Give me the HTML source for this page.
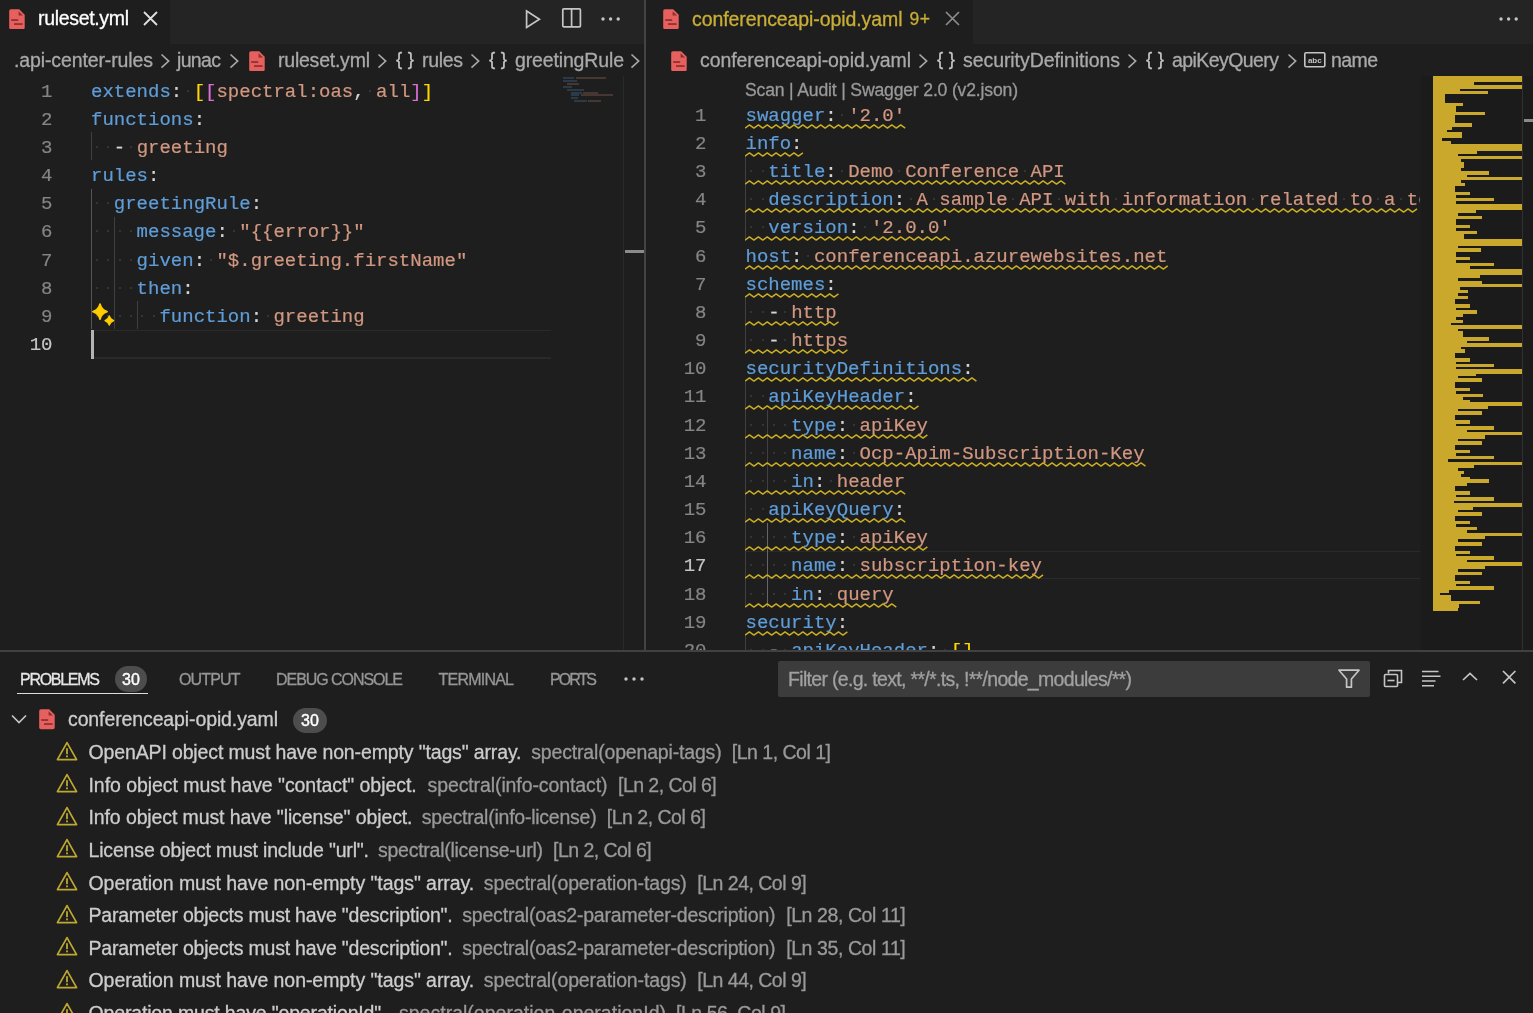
<!DOCTYPE html>
<html><head><meta charset="utf-8"><title>VS Code</title><style>
html,body{margin:0;padding:0;background:#1e1e1e;}
body{width:1533px;height:1013px;overflow:hidden;position:relative;font-family:"Liberation Sans", sans-serif;}
#r{position:absolute;left:0;top:0;width:1533px;height:1013px;overflow:hidden;background:#1e1e1e;filter:blur(0.55px);}
#r>div,#r>svg{position:absolute;}
.t{white-space:pre;-webkit-text-stroke:0.3px;}
.c{white-space:pre;font-family:"Liberation Mono", monospace;font-size:19px;-webkit-text-stroke:0.2px;}
.badge{-webkit-text-stroke:0.4px;background:#4d4d4d;color:#fff;border-radius:13px;text-align:center;font-family:"Liberation Sans", sans-serif;}
.m{font-family:"Liberation Mono", monospace;}
</style></head><body><div id="r">
<div style="left:0px;top:0px;width:1533px;height:44px;background:#242424;"></div>
<div style="left:0px;top:0px;width:169.8px;height:44px;background:#1e1e1e;"></div>
<div style="left:646px;top:0px;width:326.5px;height:44px;background:#1e1e1e;"></div>
<div style="left:644.2px;top:0px;width:1.4px;height:651px;background:#444444;"></div>
<svg style="left:9px;top:8.5px" width="16" height="20.5" viewBox="0 0 16 20.5"><path d="M2 0.3 H10.2 L15.7 5.8 V18.4 a1.8 1.8 0 0 1 -1.8 1.8 H2 a1.8 1.8 0 0 1 -1.8 -1.8 V2.1 A1.8 1.8 0 0 1 2 0.3 Z" fill="#e5605e"/><path d="M9.6 2.2 V6.6 H14 Z" fill="#8c2f2c"/><rect x="2.2" y="10.2" width="7" height="1.7" fill="#8c2f2c"/><rect x="5" y="14.2" width="8.6" height="1.7" fill="#8c2f2c"/></svg>
<div id="t1" class="t" style="left:38px;top:3.40px;height:30px;line-height:30px;font-size:19.5px;color:#ffffff;font-weight:400;letter-spacing:-0.328px;">ruleset.yml</div>
<svg style="left:142.9px;top:11.100000000000001px" width="15.0" height="15.0" viewBox="-7.5 -7.5 15.0 15.0"><path d="M-6.5 -6.5 L6.5 6.5 M6.5 -6.5 L-6.5 6.5" stroke="#e0e0e0" stroke-width="1.8" fill="none"/></svg>
<svg style="left:523px;top:8px" width="20" height="22" viewBox="0 0 20 22"><path d="M3.6 3 L16.4 11.2 L3.6 19.4 Z" fill="none" stroke="#c5c5c5" stroke-width="1.7" stroke-linejoin="miter"/></svg>
<svg style="left:561.4px;top:7.2px" width="22" height="22" viewBox="0 0 22 22"><rect x="1.8" y="1.8" width="17.6" height="18" rx="1" fill="none" stroke="#c5c5c5" stroke-width="1.7"/><path d="M10.6 2 V19.6" stroke="#c5c5c5" stroke-width="1.7"/></svg>
<svg style="left:599.9px;top:15.5px" width="21.2" height="6" viewBox="-10.6 -3 21.2 6"><circle cx="-7.6" cy="0" r="1.7" fill="#c5c5c5"/><circle cx="0" cy="0" r="1.7" fill="#c5c5c5"/><circle cx="7.6" cy="0" r="1.7" fill="#c5c5c5"/></svg>
<div id="t2" class="t" style="left:14px;top:45.40px;height:30px;line-height:30px;font-size:19.5px;color:#a9a9a9;font-weight:400;letter-spacing:-0.118px;">.api-center-rules</div>
<svg style="left:159.9px;top:52.8px" width="10.2" height="16.2" viewBox="-1 -1 10.2 16.2"><path d="M0.5 0.5 L7.7 7.1 L0.5 13.7" fill="none" stroke="#a9a9a9" stroke-width="1.6"/></svg>
<div id="t3" class="t" style="left:177px;top:45.40px;height:30px;line-height:30px;font-size:19.5px;color:#a9a9a9;font-weight:400;letter-spacing:-0.656px;">junac</div>
<svg style="left:229.4px;top:52.8px" width="10.2" height="16.2" viewBox="-1 -1 10.2 16.2"><path d="M0.5 0.5 L7.7 7.1 L0.5 13.7" fill="none" stroke="#a9a9a9" stroke-width="1.6"/></svg>
<svg style="left:249px;top:50.5px" width="16" height="20.5" viewBox="0 0 16 20.5"><path d="M2 0.3 H10.2 L15.7 5.8 V18.4 a1.8 1.8 0 0 1 -1.8 1.8 H2 a1.8 1.8 0 0 1 -1.8 -1.8 V2.1 A1.8 1.8 0 0 1 2 0.3 Z" fill="#e5605e"/><path d="M9.6 2.2 V6.6 H14 Z" fill="#8c2f2c"/><rect x="2.2" y="10.2" width="7" height="1.7" fill="#8c2f2c"/><rect x="5" y="14.2" width="8.6" height="1.7" fill="#8c2f2c"/></svg>
<div id="t4" class="t" style="left:278px;top:45.40px;height:30px;line-height:30px;font-size:19.5px;color:#a9a9a9;font-weight:400;letter-spacing:-0.228px;">ruleset.yml</div>
<svg style="left:376.9px;top:52.8px" width="10.2" height="16.2" viewBox="-1 -1 10.2 16.2"><path d="M0.5 0.5 L7.7 7.1 L0.5 13.7" fill="none" stroke="#a9a9a9" stroke-width="1.6"/></svg>
<div id="t5" class="t" style="left:396px;top:43.80px;height:30px;line-height:30px;font-size:18.6px;color:#c5c5c5;font-weight:400;letter-spacing:5.578px;letter-spacing:5.6px;">{}</div>
<div id="t6" class="t" style="left:422px;top:45.40px;height:30px;line-height:30px;font-size:19.5px;color:#a9a9a9;font-weight:400;letter-spacing:-0.320px;">rules</div>
<svg style="left:470.4px;top:52.8px" width="10.2" height="16.2" viewBox="-1 -1 10.2 16.2"><path d="M0.5 0.5 L7.7 7.1 L0.5 13.7" fill="none" stroke="#a9a9a9" stroke-width="1.6"/></svg>
<div id="t7" class="t" style="left:489px;top:43.80px;height:30px;line-height:30px;font-size:18.6px;color:#c5c5c5;font-weight:400;letter-spacing:5.578px;letter-spacing:5.6px;">{}</div>
<div id="t8" class="t" style="left:515px;top:45.40px;height:30px;line-height:30px;font-size:19.5px;color:#a9a9a9;font-weight:400;letter-spacing:-0.143px;">greetingRule</div>
<svg style="left:629.9px;top:52.8px" width="10.2" height="16.2" viewBox="-1 -1 10.2 16.2"><path d="M0.5 0.5 L7.7 7.1 L0.5 13.7" fill="none" stroke="#a9a9a9" stroke-width="1.6"/></svg>
<div style="left:91px;top:329.94500000000005px;width:460px;height:1.3px;background:#2a2a2a;"></div>
<div style="left:91px;top:357.21500000000003px;width:460px;height:1.3px;background:#2a2a2a;"></div>
<div style="left:90.8px;top:132.25px;width:1.2px;height:28.17px;background:#404040"></div>
<div style="left:90.8px;top:188.59px;width:1.2px;height:140.85px;background:#555555"></div>
<div style="left:113.5px;top:216.77px;width:1.2px;height:112.68px;background:#404040"></div>
<div style="left:137px;top:301.28px;width:1.2px;height:28.17px;background:#404040"></div>
<div class="c" style="left:-7.5px;width:60px;text-align:right;top:77.51px;height:28.17px;line-height:28.17px;color:#858585">1</div>
<div class="c" style="left:91px;top:77.51px;height:28.17px;line-height:28.17px;"><span style="color:#5f9dd8">extends</span><span style="color:#d4d4d4">:</span><span style="color:#d4d4d4"> </span><span style="color:#ffd700">[</span><span style="color:#da70d6">[</span><span style="color:#d19780">spectral:oas</span><span style="color:#d4d4d4">,</span><span style="color:#d4d4d4"> </span><span style="color:#d19780">all</span><span style="color:#da70d6">]</span><span style="color:#ffd700">]</span></div>
<div style="left:186.9px;top:89.5px;width:2px;height:2px;background:#3d3d3d;border-radius:1px"></div>
<div style="left:369.3px;top:89.5px;width:2px;height:2px;background:#3d3d3d;border-radius:1px"></div>
<div class="c" style="left:-7.5px;width:60px;text-align:right;top:105.69px;height:28.17px;line-height:28.17px;color:#858585">2</div>
<div class="c" style="left:91px;top:105.69px;height:28.17px;line-height:28.17px;"><span style="color:#5f9dd8">functions</span><span style="color:#d4d4d4">:</span></div>
<div class="c" style="left:-7.5px;width:60px;text-align:right;top:133.85px;height:28.17px;line-height:28.17px;color:#858585">3</div>
<div class="c" style="left:91px;top:133.85px;height:28.17px;line-height:28.17px;"><span style="color:#d4d4d4">  </span><span style="color:#d4d4d4">-</span><span style="color:#d4d4d4"> </span><span style="color:#d19780">greeting</span></div>
<div style="left:95.7px;top:145.8px;width:2px;height:2px;background:#3d3d3d;border-radius:1px"></div>
<div style="left:107.1px;top:145.8px;width:2px;height:2px;background:#3d3d3d;border-radius:1px"></div>
<div style="left:129.9px;top:145.8px;width:2px;height:2px;background:#3d3d3d;border-radius:1px"></div>
<div class="c" style="left:-7.5px;width:60px;text-align:right;top:162.02px;height:28.17px;line-height:28.17px;color:#858585">4</div>
<div class="c" style="left:91px;top:162.02px;height:28.17px;line-height:28.17px;"><span style="color:#5f9dd8">rules</span><span style="color:#d4d4d4">:</span></div>
<div class="c" style="left:-7.5px;width:60px;text-align:right;top:190.19px;height:28.17px;line-height:28.17px;color:#858585">5</div>
<div class="c" style="left:91px;top:190.19px;height:28.17px;line-height:28.17px;"><span style="color:#d4d4d4">  </span><span style="color:#5f9dd8">greetingRule</span><span style="color:#d4d4d4">:</span></div>
<div style="left:95.7px;top:202.2px;width:2px;height:2px;background:#3d3d3d;border-radius:1px"></div>
<div style="left:107.1px;top:202.2px;width:2px;height:2px;background:#3d3d3d;border-radius:1px"></div>
<div class="c" style="left:-7.5px;width:60px;text-align:right;top:218.37px;height:28.17px;line-height:28.17px;color:#858585">6</div>
<div class="c" style="left:91px;top:218.37px;height:28.17px;line-height:28.17px;"><span style="color:#d4d4d4">    </span><span style="color:#5f9dd8">message</span><span style="color:#d4d4d4">:</span><span style="color:#d4d4d4"> </span><span style="color:#d19780">&quot;{{error}}&quot;</span></div>
<div style="left:95.7px;top:230.4px;width:2px;height:2px;background:#3d3d3d;border-radius:1px"></div>
<div style="left:107.1px;top:230.4px;width:2px;height:2px;background:#3d3d3d;border-radius:1px"></div>
<div style="left:118.5px;top:230.4px;width:2px;height:2px;background:#3d3d3d;border-radius:1px"></div>
<div style="left:129.9px;top:230.4px;width:2px;height:2px;background:#3d3d3d;border-radius:1px"></div>
<div style="left:232.5px;top:230.4px;width:2px;height:2px;background:#3d3d3d;border-radius:1px"></div>
<div class="c" style="left:-7.5px;width:60px;text-align:right;top:246.53px;height:28.17px;line-height:28.17px;color:#858585">7</div>
<div class="c" style="left:91px;top:246.53px;height:28.17px;line-height:28.17px;"><span style="color:#d4d4d4">    </span><span style="color:#5f9dd8">given</span><span style="color:#d4d4d4">:</span><span style="color:#d4d4d4"> </span><span style="color:#d19780">&quot;$.greeting.firstName&quot;</span></div>
<div style="left:95.7px;top:258.5px;width:2px;height:2px;background:#3d3d3d;border-radius:1px"></div>
<div style="left:107.1px;top:258.5px;width:2px;height:2px;background:#3d3d3d;border-radius:1px"></div>
<div style="left:118.5px;top:258.5px;width:2px;height:2px;background:#3d3d3d;border-radius:1px"></div>
<div style="left:129.9px;top:258.5px;width:2px;height:2px;background:#3d3d3d;border-radius:1px"></div>
<div style="left:209.7px;top:258.5px;width:2px;height:2px;background:#3d3d3d;border-radius:1px"></div>
<div class="c" style="left:-7.5px;width:60px;text-align:right;top:274.71px;height:28.17px;line-height:28.17px;color:#858585">8</div>
<div class="c" style="left:91px;top:274.71px;height:28.17px;line-height:28.17px;"><span style="color:#d4d4d4">    </span><span style="color:#5f9dd8">then</span><span style="color:#d4d4d4">:</span></div>
<div style="left:95.7px;top:286.7px;width:2px;height:2px;background:#3d3d3d;border-radius:1px"></div>
<div style="left:107.1px;top:286.7px;width:2px;height:2px;background:#3d3d3d;border-radius:1px"></div>
<div style="left:118.5px;top:286.7px;width:2px;height:2px;background:#3d3d3d;border-radius:1px"></div>
<div style="left:129.9px;top:286.7px;width:2px;height:2px;background:#3d3d3d;border-radius:1px"></div>
<div class="c" style="left:-7.5px;width:60px;text-align:right;top:302.88px;height:28.17px;line-height:28.17px;color:#858585">9</div>
<div class="c" style="left:91px;top:302.88px;height:28.17px;line-height:28.17px;"><span style="color:#d4d4d4">      </span><span style="color:#5f9dd8">function</span><span style="color:#d4d4d4">:</span><span style="color:#d4d4d4"> </span><span style="color:#d19780">greeting</span></div>
<div style="left:95.7px;top:314.9px;width:2px;height:2px;background:#3d3d3d;border-radius:1px"></div>
<div style="left:107.1px;top:314.9px;width:2px;height:2px;background:#3d3d3d;border-radius:1px"></div>
<div style="left:118.5px;top:314.9px;width:2px;height:2px;background:#3d3d3d;border-radius:1px"></div>
<div style="left:129.9px;top:314.9px;width:2px;height:2px;background:#3d3d3d;border-radius:1px"></div>
<div style="left:141.3px;top:314.9px;width:2px;height:2px;background:#3d3d3d;border-radius:1px"></div>
<div style="left:152.7px;top:314.9px;width:2px;height:2px;background:#3d3d3d;border-radius:1px"></div>
<div style="left:266.7px;top:314.9px;width:2px;height:2px;background:#3d3d3d;border-radius:1px"></div>
<div class="c" style="left:-7.5px;width:60px;text-align:right;top:331.05px;height:28.17px;line-height:28.17px;color:#c6c6c6">10</div>
<div style="left:90.6px;top:330.0450000000001px;width:3.6px;height:28.470000000000002px;background:#b4b4b4;"></div>
<svg style="left:91px;top:301.8px" width="26" height="28" viewBox="0 0 26 28"><path d="M9 2.2 C9.9 6 12 8.4 16 9.6 C12 10.8 9.9 13.2 9 17 C8.1 13.2 6 10.8 2 9.6 C6 8.4 8.1 6 9 2.2 Z" fill="#ffcc00" stroke="#ffcc00" stroke-width="1.8" stroke-linejoin="round"/><path d="M18.3 14 C18.8 16.3 20 17.6 22.6 18.6 C20 19.6 18.8 20.9 18.3 23.2 C17.8 20.9 16.6 19.6 14 18.6 C16.6 17.6 17.8 16.3 18.3 14 Z" fill="#ffcc00" stroke="#ffcc00" stroke-width="1.3" stroke-linejoin="round"/></svg>
<div style="left:563.0px;top:77.0px;width:11.2px;height:2px;background:#5f9dd8;opacity:.22"></div>
<div style="left:575.5px;top:77.0px;width:30.0px;height:2px;background:#d19780;opacity:.22"></div>
<div style="left:563.0px;top:79.9px;width:13.8px;height:2px;background:#5f9dd8;opacity:.22"></div>
<div style="left:566.8px;top:82.8px;width:12.5px;height:2px;background:#d19780;opacity:.22"></div>
<div style="left:563.0px;top:85.7px;width:8.8px;height:2px;background:#5f9dd8;opacity:.22"></div>
<div style="left:566.8px;top:88.6px;width:17.5px;height:2px;background:#5f9dd8;opacity:.22"></div>
<div style="left:570.5px;top:91.5px;width:11.2px;height:2px;background:#5f9dd8;opacity:.22"></div>
<div style="left:583.0px;top:91.5px;width:15.0px;height:2px;background:#d19780;opacity:.22"></div>
<div style="left:570.5px;top:94.4px;width:8.8px;height:2px;background:#5f9dd8;opacity:.22"></div>
<div style="left:580.5px;top:94.4px;width:32.5px;height:2px;background:#d19780;opacity:.22"></div>
<div style="left:570.5px;top:97.3px;width:7.5px;height:2px;background:#5f9dd8;opacity:.22"></div>
<div style="left:574.2px;top:100.2px;width:12.5px;height:2px;background:#5f9dd8;opacity:.22"></div>
<div style="left:588.0px;top:100.2px;width:12.5px;height:2px;background:#d19780;opacity:.22"></div>
<div style="left:624.6px;top:250px;width:19.6px;height:3px;background:#8a8a8a;"></div>
<div style="left:623px;top:76px;width:1px;height:575px;background:#2a2a2a;"></div>
<svg style="left:663px;top:8.5px" width="16" height="20.5" viewBox="0 0 16 20.5"><path d="M2 0.3 H10.2 L15.7 5.8 V18.4 a1.8 1.8 0 0 1 -1.8 1.8 H2 a1.8 1.8 0 0 1 -1.8 -1.8 V2.1 A1.8 1.8 0 0 1 2 0.3 Z" fill="#e5605e"/><path d="M9.6 2.2 V6.6 H14 Z" fill="#8c2f2c"/><rect x="2.2" y="10.2" width="7" height="1.7" fill="#8c2f2c"/><rect x="5" y="14.2" width="8.6" height="1.7" fill="#8c2f2c"/></svg>
<div id="t9" class="t" style="left:692px;top:4.20px;height:30px;line-height:30px;font-size:19.5px;color:#c9ae36;font-weight:400;letter-spacing:-0.089px;">conferenceapi-opid.yaml</div>
<div id="t10" class="t" style="left:909.4px;top:4.20px;height:30px;line-height:30px;font-size:17.5px;color:#c9ae36;font-weight:400;letter-spacing:0.647px;">9+</div>
<svg style="left:944.5px;top:10.899999999999999px" width="15.0" height="15.0" viewBox="-7.5 -7.5 15.0 15.0"><path d="M-6.5 -6.5 L6.5 6.5 M6.5 -6.5 L-6.5 6.5" stroke="#8c8c8c" stroke-width="1.7" fill="none"/></svg>
<svg style="left:1497.9px;top:15.5px" width="21.2" height="6" viewBox="-10.6 -3 21.2 6"><circle cx="-7.6" cy="0" r="1.7" fill="#c5c5c5"/><circle cx="0" cy="0" r="1.7" fill="#c5c5c5"/><circle cx="7.6" cy="0" r="1.7" fill="#c5c5c5"/></svg>
<svg style="left:671px;top:50.5px" width="16" height="20.5" viewBox="0 0 16 20.5"><path d="M2 0.3 H10.2 L15.7 5.8 V18.4 a1.8 1.8 0 0 1 -1.8 1.8 H2 a1.8 1.8 0 0 1 -1.8 -1.8 V2.1 A1.8 1.8 0 0 1 2 0.3 Z" fill="#e5605e"/><path d="M9.6 2.2 V6.6 H14 Z" fill="#8c2f2c"/><rect x="2.2" y="10.2" width="7" height="1.7" fill="#8c2f2c"/><rect x="5" y="14.2" width="8.6" height="1.7" fill="#8c2f2c"/></svg>
<div id="t11" class="t" style="left:700px;top:45.40px;height:30px;line-height:30px;font-size:19.5px;color:#a9a9a9;font-weight:400;letter-spacing:-0.066px;">conferenceapi-opid.yaml</div>
<svg style="left:917.9px;top:52.8px" width="10.2" height="16.2" viewBox="-1 -1 10.2 16.2"><path d="M0.5 0.5 L7.7 7.1 L0.5 13.7" fill="none" stroke="#a9a9a9" stroke-width="1.6"/></svg>
<div id="t12" class="t" style="left:937px;top:43.80px;height:30px;line-height:30px;font-size:18.6px;color:#c5c5c5;font-weight:400;letter-spacing:5.578px;letter-spacing:5.6px;">{}</div>
<div id="t13" class="t" style="left:963px;top:45.40px;height:30px;line-height:30px;font-size:19.5px;color:#a9a9a9;font-weight:400;letter-spacing:-0.069px;">securityDefinitions</div>
<svg style="left:1126.9px;top:52.8px" width="10.2" height="16.2" viewBox="-1 -1 10.2 16.2"><path d="M0.5 0.5 L7.7 7.1 L0.5 13.7" fill="none" stroke="#a9a9a9" stroke-width="1.6"/></svg>
<div id="t14" class="t" style="left:1146px;top:43.80px;height:30px;line-height:30px;font-size:18.6px;color:#c5c5c5;font-weight:400;letter-spacing:5.578px;letter-spacing:5.6px;">{}</div>
<div id="t15" class="t" style="left:1172px;top:45.40px;height:30px;line-height:30px;font-size:19.5px;color:#a9a9a9;font-weight:400;letter-spacing:-0.573px;">apiKeyQuery</div>
<svg style="left:1286.9px;top:52.8px" width="10.2" height="16.2" viewBox="-1 -1 10.2 16.2"><path d="M0.5 0.5 L7.7 7.1 L0.5 13.7" fill="none" stroke="#a9a9a9" stroke-width="1.6"/></svg>
<svg style="left:1303px;top:50.5px" width="24" height="18" viewBox="0 0 24 18"><rect x="1.8" y="1.8" width="20" height="14" rx="1.2" fill="none" stroke="#c5c5c5" stroke-width="1.6"/><text x="11.8" y="11.8" font-family="Liberation Sans, sans-serif" font-size="8" font-weight="700" fill="#c5c5c5" text-anchor="middle">abc</text></svg>
<div id="t16" class="t" style="left:1331px;top:45.40px;height:30px;line-height:30px;font-size:19.5px;color:#a9a9a9;font-weight:400;letter-spacing:-0.594px;">name</div>
<div id="t17" class="t" style="left:745px;top:75.00px;height:30px;line-height:30px;font-size:17.6px;color:#999999;font-weight:400;letter-spacing:-0.173px;">Scan | Audit | Swagger 2.0 (v2.json)</div>
<div style="left:745px;top:550.835px;width:675px;height:1.3px;background:#2a2a2a;"></div>
<div style="left:745px;top:577.7050000000002px;width:675px;height:1.3px;background:#2a2a2a;"></div>
<div style="left:745.1px;top:156.46px;width:1.2px;height:84.51px;background:#404040"></div>
<div style="left:745.1px;top:297.31px;width:1.2px;height:56.34px;background:#404040"></div>
<div style="left:745.1px;top:381.82px;width:1.2px;height:225.36px;background:#404040"></div>
<div style="left:745.1px;top:635.35px;width:1.2px;height:28.17px;background:#404040"></div>
<div style="left:767.3px;top:409.99px;width:1.2px;height:84.51px;background:#404040"></div>
<div style="left:767.3px;top:522.66px;width:1.2px;height:84.51px;background:#666666"></div>
<div class="c" style="left:646.5px;width:60px;text-align:right;top:101.72px;height:28.17px;line-height:28.17px;color:#858585">1</div>
<div class="c" style="left:745.5px;top:101.72px;height:28.17px;line-height:28.17px;width:674.5px;overflow:hidden;"><span style="color:#5f9dd8">swagger</span><span style="color:#d4d4d4">:</span><span style="color:#d4d4d4"> </span><span style="color:#d19780">&#x27;2.0&#x27;</span></div>
<div style="left:841.4px;top:113.7px;width:2px;height:2px;background:#3d3d3d;border-radius:1px"></div>
<svg style="left:745px;top:123.69px" width="163.1" height="5" viewBox="0 0 163.1 5"><path d="M0.0 4.1 L4.5 0.9 L8.9 4.1 L13.4 0.9 L17.8 4.1 L22.2 0.9 L26.7 4.1 L31.1 0.9 L35.6 4.1 L40.1 0.9 L44.5 4.1 L49.0 0.9 L53.4 4.1 L57.9 0.9 L62.3 4.1 L66.8 0.9 L71.2 4.1 L75.7 0.9 L80.1 4.1 L84.6 0.9 L89.0 4.1 L93.5 0.9 L97.9 4.1 L102.4 0.9 L106.8 4.1 L111.3 0.9 L115.7 4.1 L120.2 0.9 L124.6 4.1 L129.1 0.9 L133.5 4.1 L138.0 0.9 L142.4 4.1 L146.8 0.9 L151.3 4.1 L155.7 0.9 L160.2 4.1" fill="none" stroke="#c9ad22" stroke-width="1.5" stroke-linejoin="round"/></svg>
<div class="c" style="left:646.5px;width:60px;text-align:right;top:129.88px;height:28.17px;line-height:28.17px;color:#858585">2</div>
<div class="c" style="left:745.5px;top:129.88px;height:28.17px;line-height:28.17px;width:674.5px;overflow:hidden;"><span style="color:#5f9dd8">info</span><span style="color:#d4d4d4">:</span></div>
<svg style="left:745px;top:151.86px" width="60.5" height="5" viewBox="0 0 60.5 5"><path d="M0.0 4.1 L4.5 0.9 L8.9 4.1 L13.4 0.9 L17.8 4.1 L22.2 0.9 L26.7 4.1 L31.1 0.9 L35.6 4.1 L40.1 0.9 L44.5 4.1 L49.0 0.9 L53.4 4.1 L57.9 0.9" fill="none" stroke="#c9ad22" stroke-width="1.5" stroke-linejoin="round"/></svg>
<div class="c" style="left:646.5px;width:60px;text-align:right;top:158.06px;height:28.17px;line-height:28.17px;color:#858585">3</div>
<div class="c" style="left:745.5px;top:158.06px;height:28.17px;line-height:28.17px;width:674.5px;overflow:hidden;"><span style="color:#d4d4d4">  </span><span style="color:#5f9dd8">title</span><span style="color:#d4d4d4">:</span><span style="color:#d4d4d4"> </span><span style="color:#d19780">Demo Conference API</span></div>
<div style="left:750.2px;top:170.0px;width:2px;height:2px;background:#3d3d3d;border-radius:1px"></div>
<div style="left:761.6px;top:170.0px;width:2px;height:2px;background:#3d3d3d;border-radius:1px"></div>
<div style="left:841.4px;top:170.0px;width:2px;height:2px;background:#3d3d3d;border-radius:1px"></div>
<div style="left:898.4px;top:170.0px;width:2px;height:2px;background:#3d3d3d;border-radius:1px"></div>
<div style="left:1023.8px;top:170.0px;width:2px;height:2px;background:#3d3d3d;border-radius:1px"></div>
<svg style="left:745px;top:180.03px" width="322.8" height="5" viewBox="0 0 322.8 5"><path d="M0.0 4.1 L4.5 0.9 L8.9 4.1 L13.4 0.9 L17.8 4.1 L22.2 0.9 L26.7 4.1 L31.1 0.9 L35.6 4.1 L40.1 0.9 L44.5 4.1 L49.0 0.9 L53.4 4.1 L57.9 0.9 L62.3 4.1 L66.8 0.9 L71.2 4.1 L75.7 0.9 L80.1 4.1 L84.6 0.9 L89.0 4.1 L93.5 0.9 L97.9 4.1 L102.4 0.9 L106.8 4.1 L111.3 0.9 L115.7 4.1 L120.2 0.9 L124.6 4.1 L129.1 0.9 L133.5 4.1 L138.0 0.9 L142.4 4.1 L146.8 0.9 L151.3 4.1 L155.7 0.9 L160.2 4.1 L164.6 0.9 L169.1 4.1 L173.5 0.9 L178.0 4.1 L182.4 0.9 L186.9 4.1 L191.3 0.9 L195.8 4.1 L200.2 0.9 L204.7 4.1 L209.1 0.9 L213.6 4.1 L218.0 0.9 L222.5 4.1 L226.9 0.9 L231.4 4.1 L235.8 0.9 L240.3 4.1 L244.7 0.9 L249.2 4.1 L253.6 0.9 L258.1 4.1 L262.5 0.9 L267.0 4.1 L271.4 0.9 L275.9 4.1 L280.3 0.9 L284.8 4.1 L289.2 0.9 L293.7 4.1 L298.1 0.9 L302.6 4.1 L307.0 0.9 L311.5 4.1 L315.9 0.9 L320.4 4.1" fill="none" stroke="#c9ad22" stroke-width="1.5" stroke-linejoin="round"/></svg>
<div class="c" style="left:646.5px;width:60px;text-align:right;top:186.22px;height:28.17px;line-height:28.17px;color:#858585">4</div>
<div class="c" style="left:745.5px;top:186.22px;height:28.17px;line-height:28.17px;width:674.5px;overflow:hidden;"><span style="color:#d4d4d4">  </span><span style="color:#5f9dd8">description</span><span style="color:#d4d4d4">:</span><span style="color:#d4d4d4"> </span><span style="color:#d19780">A sample API with information related to a technical conference.</span></div>
<div style="left:750.2px;top:198.2px;width:2px;height:2px;background:#3d3d3d;border-radius:1px"></div>
<div style="left:761.6px;top:198.2px;width:2px;height:2px;background:#3d3d3d;border-radius:1px"></div>
<div style="left:909.8px;top:198.2px;width:2px;height:2px;background:#3d3d3d;border-radius:1px"></div>
<div style="left:932.6px;top:198.2px;width:2px;height:2px;background:#3d3d3d;border-radius:1px"></div>
<div style="left:1012.4px;top:198.2px;width:2px;height:2px;background:#3d3d3d;border-radius:1px"></div>
<div style="left:1058.1px;top:198.2px;width:2px;height:2px;background:#3d3d3d;border-radius:1px"></div>
<div style="left:1115.1px;top:198.2px;width:2px;height:2px;background:#3d3d3d;border-radius:1px"></div>
<div style="left:1251.9px;top:198.2px;width:2px;height:2px;background:#3d3d3d;border-radius:1px"></div>
<div style="left:1343.1px;top:198.2px;width:2px;height:2px;background:#3d3d3d;border-radius:1px"></div>
<div style="left:1377.3px;top:198.2px;width:2px;height:2px;background:#3d3d3d;border-radius:1px"></div>
<div style="left:1400.1px;top:198.2px;width:2px;height:2px;background:#3d3d3d;border-radius:1px"></div>
<svg style="left:745px;top:208.20px" width="675.0" height="5" viewBox="0 0 675.0 5"><path d="M0.0 4.1 L4.5 0.9 L8.9 4.1 L13.4 0.9 L17.8 4.1 L22.2 0.9 L26.7 4.1 L31.1 0.9 L35.6 4.1 L40.1 0.9 L44.5 4.1 L49.0 0.9 L53.4 4.1 L57.9 0.9 L62.3 4.1 L66.8 0.9 L71.2 4.1 L75.7 0.9 L80.1 4.1 L84.6 0.9 L89.0 4.1 L93.5 0.9 L97.9 4.1 L102.4 0.9 L106.8 4.1 L111.3 0.9 L115.7 4.1 L120.2 0.9 L124.6 4.1 L129.1 0.9 L133.5 4.1 L138.0 0.9 L142.4 4.1 L146.8 0.9 L151.3 4.1 L155.7 0.9 L160.2 4.1 L164.6 0.9 L169.1 4.1 L173.5 0.9 L178.0 4.1 L182.4 0.9 L186.9 4.1 L191.3 0.9 L195.8 4.1 L200.2 0.9 L204.7 4.1 L209.1 0.9 L213.6 4.1 L218.0 0.9 L222.5 4.1 L226.9 0.9 L231.4 4.1 L235.8 0.9 L240.3 4.1 L244.7 0.9 L249.2 4.1 L253.6 0.9 L258.1 4.1 L262.5 0.9 L267.0 4.1 L271.4 0.9 L275.9 4.1 L280.3 0.9 L284.8 4.1 L289.2 0.9 L293.7 4.1 L298.1 0.9 L302.6 4.1 L307.0 0.9 L311.5 4.1 L315.9 0.9 L320.4 4.1 L324.8 0.9 L329.3 4.1 L333.7 0.9 L338.2 4.1 L342.6 0.9 L347.1 4.1 L351.5 0.9 L356.0 4.1 L360.4 0.9 L364.9 4.1 L369.3 0.9 L373.8 4.1 L378.2 0.9 L382.7 4.1 L387.1 0.9 L391.6 4.1 L396.0 0.9 L400.5 4.1 L404.9 0.9 L409.4 4.1 L413.8 0.9 L418.3 4.1 L422.7 0.9 L427.2 4.1 L431.6 0.9 L436.1 4.1 L440.5 0.9 L445.0 4.1 L449.4 0.9 L453.9 4.1 L458.3 0.9 L462.8 4.1 L467.2 0.9 L471.7 4.1 L476.1 0.9 L480.6 4.1 L485.0 0.9 L489.5 4.1 L493.9 0.9 L498.4 4.1 L502.8 0.9 L507.3 4.1 L511.7 0.9 L516.2 4.1 L520.6 0.9 L525.1 4.1 L529.5 0.9 L534.0 4.1 L538.4 0.9 L542.9 4.1 L547.3 0.9 L551.8 4.1 L556.2 0.9 L560.7 4.1 L565.1 0.9 L569.6 4.1 L574.0 0.9 L578.5 4.1 L582.9 0.9 L587.4 4.1 L591.8 0.9 L596.3 4.1 L600.8 0.9 L605.2 4.1 L609.7 0.9 L614.1 4.1 L618.6 0.9 L623.0 4.1 L627.5 0.9 L631.9 4.1 L636.4 0.9 L640.8 4.1 L645.3 0.9 L649.7 4.1 L654.2 0.9 L658.6 4.1 L663.1 0.9 L667.5 4.1 L672.0 0.9" fill="none" stroke="#c9ad22" stroke-width="1.5" stroke-linejoin="round"/></svg>
<div class="c" style="left:646.5px;width:60px;text-align:right;top:214.39px;height:28.17px;line-height:28.17px;color:#858585">5</div>
<div class="c" style="left:745.5px;top:214.39px;height:28.17px;line-height:28.17px;width:674.5px;overflow:hidden;"><span style="color:#d4d4d4">  </span><span style="color:#5f9dd8">version</span><span style="color:#d4d4d4">:</span><span style="color:#d4d4d4"> </span><span style="color:#d19780">&#x27;2.0.0&#x27;</span></div>
<div style="left:750.2px;top:226.4px;width:2px;height:2px;background:#3d3d3d;border-radius:1px"></div>
<div style="left:761.6px;top:226.4px;width:2px;height:2px;background:#3d3d3d;border-radius:1px"></div>
<div style="left:864.2px;top:226.4px;width:2px;height:2px;background:#3d3d3d;border-radius:1px"></div>
<svg style="left:745px;top:236.37px" width="208.7" height="5" viewBox="0 0 208.7 5"><path d="M0.0 4.1 L4.5 0.9 L8.9 4.1 L13.4 0.9 L17.8 4.1 L22.2 0.9 L26.7 4.1 L31.1 0.9 L35.6 4.1 L40.1 0.9 L44.5 4.1 L49.0 0.9 L53.4 4.1 L57.9 0.9 L62.3 4.1 L66.8 0.9 L71.2 4.1 L75.7 0.9 L80.1 4.1 L84.6 0.9 L89.0 4.1 L93.5 0.9 L97.9 4.1 L102.4 0.9 L106.8 4.1 L111.3 0.9 L115.7 4.1 L120.2 0.9 L124.6 4.1 L129.1 0.9 L133.5 4.1 L138.0 0.9 L142.4 4.1 L146.8 0.9 L151.3 4.1 L155.7 0.9 L160.2 4.1 L164.6 0.9 L169.1 4.1 L173.5 0.9 L178.0 4.1 L182.4 0.9 L186.9 4.1 L191.3 0.9 L195.8 4.1 L200.2 0.9 L204.7 4.1" fill="none" stroke="#c9ad22" stroke-width="1.5" stroke-linejoin="round"/></svg>
<div class="c" style="left:646.5px;width:60px;text-align:right;top:242.56px;height:28.17px;line-height:28.17px;color:#858585">6</div>
<div class="c" style="left:745.5px;top:242.56px;height:28.17px;line-height:28.17px;width:674.5px;overflow:hidden;"><span style="color:#5f9dd8">host</span><span style="color:#d4d4d4">:</span><span style="color:#d4d4d4"> </span><span style="color:#d19780">conferenceapi.azurewebsites.net</span></div>
<div style="left:807.2px;top:254.6px;width:2px;height:2px;background:#3d3d3d;border-radius:1px"></div>
<svg style="left:745px;top:264.53px" width="425.4" height="5" viewBox="0 0 425.4 5"><path d="M0.0 4.1 L4.5 0.9 L8.9 4.1 L13.4 0.9 L17.8 4.1 L22.2 0.9 L26.7 4.1 L31.1 0.9 L35.6 4.1 L40.1 0.9 L44.5 4.1 L49.0 0.9 L53.4 4.1 L57.9 0.9 L62.3 4.1 L66.8 0.9 L71.2 4.1 L75.7 0.9 L80.1 4.1 L84.6 0.9 L89.0 4.1 L93.5 0.9 L97.9 4.1 L102.4 0.9 L106.8 4.1 L111.3 0.9 L115.7 4.1 L120.2 0.9 L124.6 4.1 L129.1 0.9 L133.5 4.1 L138.0 0.9 L142.4 4.1 L146.8 0.9 L151.3 4.1 L155.7 0.9 L160.2 4.1 L164.6 0.9 L169.1 4.1 L173.5 0.9 L178.0 4.1 L182.4 0.9 L186.9 4.1 L191.3 0.9 L195.8 4.1 L200.2 0.9 L204.7 4.1 L209.1 0.9 L213.6 4.1 L218.0 0.9 L222.5 4.1 L226.9 0.9 L231.4 4.1 L235.8 0.9 L240.3 4.1 L244.7 0.9 L249.2 4.1 L253.6 0.9 L258.1 4.1 L262.5 0.9 L267.0 4.1 L271.4 0.9 L275.9 4.1 L280.3 0.9 L284.8 4.1 L289.2 0.9 L293.7 4.1 L298.1 0.9 L302.6 4.1 L307.0 0.9 L311.5 4.1 L315.9 0.9 L320.4 4.1 L324.8 0.9 L329.3 4.1 L333.7 0.9 L338.2 4.1 L342.6 0.9 L347.1 4.1 L351.5 0.9 L356.0 4.1 L360.4 0.9 L364.9 4.1 L369.3 0.9 L373.8 4.1 L378.2 0.9 L382.7 4.1 L387.1 0.9 L391.6 4.1 L396.0 0.9 L400.5 4.1 L404.9 0.9 L409.4 4.1 L413.8 0.9 L418.3 4.1 L422.7 0.9" fill="none" stroke="#c9ad22" stroke-width="1.5" stroke-linejoin="round"/></svg>
<div class="c" style="left:646.5px;width:60px;text-align:right;top:270.74px;height:28.17px;line-height:28.17px;color:#858585">7</div>
<div class="c" style="left:745.5px;top:270.74px;height:28.17px;line-height:28.17px;width:674.5px;overflow:hidden;"><span style="color:#5f9dd8">schemes</span><span style="color:#d4d4d4">:</span></div>
<svg style="left:745px;top:292.70px" width="94.7" height="5" viewBox="0 0 94.7 5"><path d="M0.0 4.1 L4.5 0.9 L8.9 4.1 L13.4 0.9 L17.8 4.1 L22.2 0.9 L26.7 4.1 L31.1 0.9 L35.6 4.1 L40.1 0.9 L44.5 4.1 L49.0 0.9 L53.4 4.1 L57.9 0.9 L62.3 4.1 L66.8 0.9 L71.2 4.1 L75.7 0.9 L80.1 4.1 L84.6 0.9 L89.0 4.1 L93.5 0.9" fill="none" stroke="#c9ad22" stroke-width="1.5" stroke-linejoin="round"/></svg>
<div class="c" style="left:646.5px;width:60px;text-align:right;top:298.91px;height:28.17px;line-height:28.17px;color:#858585">8</div>
<div class="c" style="left:745.5px;top:298.91px;height:28.17px;line-height:28.17px;width:674.5px;overflow:hidden;"><span style="color:#d4d4d4">  </span><span style="color:#d4d4d4">-</span><span style="color:#d4d4d4"> </span><span style="color:#d19780">ht</span><span style="color:#d19780">tp</span></div>
<div style="left:750.2px;top:310.9px;width:2px;height:2px;background:#3d3d3d;border-radius:1px"></div>
<div style="left:761.6px;top:310.9px;width:2px;height:2px;background:#3d3d3d;border-radius:1px"></div>
<div style="left:784.4px;top:310.9px;width:2px;height:2px;background:#3d3d3d;border-radius:1px"></div>
<svg style="left:745px;top:320.87px" width="94.7" height="5" viewBox="0 0 94.7 5"><path d="M0.0 4.1 L4.5 0.9 L8.9 4.1 L13.4 0.9 L17.8 4.1 L22.2 0.9 L26.7 4.1 L31.1 0.9 L35.6 4.1 L40.1 0.9 L44.5 4.1 L49.0 0.9 L53.4 4.1 L57.9 0.9 L62.3 4.1 L66.8 0.9 L71.2 4.1 L75.7 0.9 L80.1 4.1 L84.6 0.9 L89.0 4.1 L93.5 0.9" fill="none" stroke="#c9ad22" stroke-width="1.5" stroke-linejoin="round"/></svg>
<div class="c" style="left:646.5px;width:60px;text-align:right;top:327.08px;height:28.17px;line-height:28.17px;color:#858585">9</div>
<div class="c" style="left:745.5px;top:327.08px;height:28.17px;line-height:28.17px;width:674.5px;overflow:hidden;"><span style="color:#d4d4d4">  </span><span style="color:#d4d4d4">-</span><span style="color:#d4d4d4"> </span><span style="color:#d19780">ht</span><span style="color:#d19780">tps</span></div>
<div style="left:750.2px;top:339.1px;width:2px;height:2px;background:#3d3d3d;border-radius:1px"></div>
<div style="left:761.6px;top:339.1px;width:2px;height:2px;background:#3d3d3d;border-radius:1px"></div>
<div style="left:784.4px;top:339.1px;width:2px;height:2px;background:#3d3d3d;border-radius:1px"></div>
<svg style="left:745px;top:349.04px" width="106.1" height="5" viewBox="0 0 106.1 5"><path d="M0.0 4.1 L4.5 0.9 L8.9 4.1 L13.4 0.9 L17.8 4.1 L22.2 0.9 L26.7 4.1 L31.1 0.9 L35.6 4.1 L40.1 0.9 L44.5 4.1 L49.0 0.9 L53.4 4.1 L57.9 0.9 L62.3 4.1 L66.8 0.9 L71.2 4.1 L75.7 0.9 L80.1 4.1 L84.6 0.9 L89.0 4.1 L93.5 0.9 L97.9 4.1 L102.4 0.9" fill="none" stroke="#c9ad22" stroke-width="1.5" stroke-linejoin="round"/></svg>
<div class="c" style="left:646.5px;width:60px;text-align:right;top:355.25px;height:28.17px;line-height:28.17px;color:#858585">10</div>
<div class="c" style="left:745.5px;top:355.25px;height:28.17px;line-height:28.17px;width:674.5px;overflow:hidden;"><span style="color:#5f9dd8">securityDefinitions</span><span style="color:#d4d4d4">:</span></div>
<svg style="left:745px;top:377.21px" width="231.5" height="5" viewBox="0 0 231.5 5"><path d="M0.0 4.1 L4.5 0.9 L8.9 4.1 L13.4 0.9 L17.8 4.1 L22.2 0.9 L26.7 4.1 L31.1 0.9 L35.6 4.1 L40.1 0.9 L44.5 4.1 L49.0 0.9 L53.4 4.1 L57.9 0.9 L62.3 4.1 L66.8 0.9 L71.2 4.1 L75.7 0.9 L80.1 4.1 L84.6 0.9 L89.0 4.1 L93.5 0.9 L97.9 4.1 L102.4 0.9 L106.8 4.1 L111.3 0.9 L115.7 4.1 L120.2 0.9 L124.6 4.1 L129.1 0.9 L133.5 4.1 L138.0 0.9 L142.4 4.1 L146.8 0.9 L151.3 4.1 L155.7 0.9 L160.2 4.1 L164.6 0.9 L169.1 4.1 L173.5 0.9 L178.0 4.1 L182.4 0.9 L186.9 4.1 L191.3 0.9 L195.8 4.1 L200.2 0.9 L204.7 4.1 L209.1 0.9 L213.6 4.1 L218.0 0.9 L222.5 4.1 L226.9 0.9 L231.4 4.1" fill="none" stroke="#c9ad22" stroke-width="1.5" stroke-linejoin="round"/></svg>
<div class="c" style="left:646.5px;width:60px;text-align:right;top:383.42px;height:28.17px;line-height:28.17px;color:#858585">11</div>
<div class="c" style="left:745.5px;top:383.42px;height:28.17px;line-height:28.17px;width:674.5px;overflow:hidden;"><span style="color:#d4d4d4">  </span><span style="color:#5f9dd8">apiKeyHeader</span><span style="color:#d4d4d4">:</span></div>
<div style="left:750.2px;top:395.4px;width:2px;height:2px;background:#3d3d3d;border-radius:1px"></div>
<div style="left:761.6px;top:395.4px;width:2px;height:2px;background:#3d3d3d;border-radius:1px"></div>
<svg style="left:745px;top:405.38px" width="174.5" height="5" viewBox="0 0 174.5 5"><path d="M0.0 4.1 L4.5 0.9 L8.9 4.1 L13.4 0.9 L17.8 4.1 L22.2 0.9 L26.7 4.1 L31.1 0.9 L35.6 4.1 L40.1 0.9 L44.5 4.1 L49.0 0.9 L53.4 4.1 L57.9 0.9 L62.3 4.1 L66.8 0.9 L71.2 4.1 L75.7 0.9 L80.1 4.1 L84.6 0.9 L89.0 4.1 L93.5 0.9 L97.9 4.1 L102.4 0.9 L106.8 4.1 L111.3 0.9 L115.7 4.1 L120.2 0.9 L124.6 4.1 L129.1 0.9 L133.5 4.1 L138.0 0.9 L142.4 4.1 L146.8 0.9 L151.3 4.1 L155.7 0.9 L160.2 4.1 L164.6 0.9 L169.1 4.1 L173.5 0.9" fill="none" stroke="#c9ad22" stroke-width="1.5" stroke-linejoin="round"/></svg>
<div class="c" style="left:646.5px;width:60px;text-align:right;top:411.59px;height:28.17px;line-height:28.17px;color:#858585">12</div>
<div class="c" style="left:745.5px;top:411.59px;height:28.17px;line-height:28.17px;width:674.5px;overflow:hidden;"><span style="color:#d4d4d4">    </span><span style="color:#5f9dd8">type</span><span style="color:#d4d4d4">:</span><span style="color:#d4d4d4"> </span><span style="color:#d19780">apiKey</span></div>
<div style="left:750.2px;top:423.6px;width:2px;height:2px;background:#3d3d3d;border-radius:1px"></div>
<div style="left:761.6px;top:423.6px;width:2px;height:2px;background:#3d3d3d;border-radius:1px"></div>
<div style="left:773.0px;top:423.6px;width:2px;height:2px;background:#3d3d3d;border-radius:1px"></div>
<div style="left:784.4px;top:423.6px;width:2px;height:2px;background:#3d3d3d;border-radius:1px"></div>
<div style="left:852.8px;top:423.6px;width:2px;height:2px;background:#3d3d3d;border-radius:1px"></div>
<svg style="left:745px;top:433.55px" width="185.9" height="5" viewBox="0 0 185.9 5"><path d="M0.0 4.1 L4.5 0.9 L8.9 4.1 L13.4 0.9 L17.8 4.1 L22.2 0.9 L26.7 4.1 L31.1 0.9 L35.6 4.1 L40.1 0.9 L44.5 4.1 L49.0 0.9 L53.4 4.1 L57.9 0.9 L62.3 4.1 L66.8 0.9 L71.2 4.1 L75.7 0.9 L80.1 4.1 L84.6 0.9 L89.0 4.1 L93.5 0.9 L97.9 4.1 L102.4 0.9 L106.8 4.1 L111.3 0.9 L115.7 4.1 L120.2 0.9 L124.6 4.1 L129.1 0.9 L133.5 4.1 L138.0 0.9 L142.4 4.1 L146.8 0.9 L151.3 4.1 L155.7 0.9 L160.2 4.1 L164.6 0.9 L169.1 4.1 L173.5 0.9 L178.0 4.1 L182.4 0.9" fill="none" stroke="#c9ad22" stroke-width="1.5" stroke-linejoin="round"/></svg>
<div class="c" style="left:646.5px;width:60px;text-align:right;top:439.76px;height:28.17px;line-height:28.17px;color:#858585">13</div>
<div class="c" style="left:745.5px;top:439.76px;height:28.17px;line-height:28.17px;width:674.5px;overflow:hidden;"><span style="color:#d4d4d4">    </span><span style="color:#5f9dd8">name</span><span style="color:#d4d4d4">:</span><span style="color:#d4d4d4"> </span><span style="color:#d19780">Ocp-Apim-Subscription-Key</span></div>
<div style="left:750.2px;top:451.7px;width:2px;height:2px;background:#3d3d3d;border-radius:1px"></div>
<div style="left:761.6px;top:451.7px;width:2px;height:2px;background:#3d3d3d;border-radius:1px"></div>
<div style="left:773.0px;top:451.7px;width:2px;height:2px;background:#3d3d3d;border-radius:1px"></div>
<div style="left:784.4px;top:451.7px;width:2px;height:2px;background:#3d3d3d;border-radius:1px"></div>
<div style="left:852.8px;top:451.7px;width:2px;height:2px;background:#3d3d3d;border-radius:1px"></div>
<svg style="left:745px;top:461.72px" width="402.6" height="5" viewBox="0 0 402.6 5"><path d="M0.0 4.1 L4.5 0.9 L8.9 4.1 L13.4 0.9 L17.8 4.1 L22.2 0.9 L26.7 4.1 L31.1 0.9 L35.6 4.1 L40.1 0.9 L44.5 4.1 L49.0 0.9 L53.4 4.1 L57.9 0.9 L62.3 4.1 L66.8 0.9 L71.2 4.1 L75.7 0.9 L80.1 4.1 L84.6 0.9 L89.0 4.1 L93.5 0.9 L97.9 4.1 L102.4 0.9 L106.8 4.1 L111.3 0.9 L115.7 4.1 L120.2 0.9 L124.6 4.1 L129.1 0.9 L133.5 4.1 L138.0 0.9 L142.4 4.1 L146.8 0.9 L151.3 4.1 L155.7 0.9 L160.2 4.1 L164.6 0.9 L169.1 4.1 L173.5 0.9 L178.0 4.1 L182.4 0.9 L186.9 4.1 L191.3 0.9 L195.8 4.1 L200.2 0.9 L204.7 4.1 L209.1 0.9 L213.6 4.1 L218.0 0.9 L222.5 4.1 L226.9 0.9 L231.4 4.1 L235.8 0.9 L240.3 4.1 L244.7 0.9 L249.2 4.1 L253.6 0.9 L258.1 4.1 L262.5 0.9 L267.0 4.1 L271.4 0.9 L275.9 4.1 L280.3 0.9 L284.8 4.1 L289.2 0.9 L293.7 4.1 L298.1 0.9 L302.6 4.1 L307.0 0.9 L311.5 4.1 L315.9 0.9 L320.4 4.1 L324.8 0.9 L329.3 4.1 L333.7 0.9 L338.2 4.1 L342.6 0.9 L347.1 4.1 L351.5 0.9 L356.0 4.1 L360.4 0.9 L364.9 4.1 L369.3 0.9 L373.8 4.1 L378.2 0.9 L382.7 4.1 L387.1 0.9 L391.6 4.1 L396.0 0.9 L400.5 4.1" fill="none" stroke="#c9ad22" stroke-width="1.5" stroke-linejoin="round"/></svg>
<div class="c" style="left:646.5px;width:60px;text-align:right;top:467.93px;height:28.17px;line-height:28.17px;color:#858585">14</div>
<div class="c" style="left:745.5px;top:467.93px;height:28.17px;line-height:28.17px;width:674.5px;overflow:hidden;"><span style="color:#d4d4d4">    </span><span style="color:#5f9dd8">in</span><span style="color:#d4d4d4">:</span><span style="color:#d4d4d4"> </span><span style="color:#d19780">header</span></div>
<div style="left:750.2px;top:479.9px;width:2px;height:2px;background:#3d3d3d;border-radius:1px"></div>
<div style="left:761.6px;top:479.9px;width:2px;height:2px;background:#3d3d3d;border-radius:1px"></div>
<div style="left:773.0px;top:479.9px;width:2px;height:2px;background:#3d3d3d;border-radius:1px"></div>
<div style="left:784.4px;top:479.9px;width:2px;height:2px;background:#3d3d3d;border-radius:1px"></div>
<div style="left:830.0px;top:479.9px;width:2px;height:2px;background:#3d3d3d;border-radius:1px"></div>
<svg style="left:745px;top:489.89px" width="163.1" height="5" viewBox="0 0 163.1 5"><path d="M0.0 4.1 L4.5 0.9 L8.9 4.1 L13.4 0.9 L17.8 4.1 L22.2 0.9 L26.7 4.1 L31.1 0.9 L35.6 4.1 L40.1 0.9 L44.5 4.1 L49.0 0.9 L53.4 4.1 L57.9 0.9 L62.3 4.1 L66.8 0.9 L71.2 4.1 L75.7 0.9 L80.1 4.1 L84.6 0.9 L89.0 4.1 L93.5 0.9 L97.9 4.1 L102.4 0.9 L106.8 4.1 L111.3 0.9 L115.7 4.1 L120.2 0.9 L124.6 4.1 L129.1 0.9 L133.5 4.1 L138.0 0.9 L142.4 4.1 L146.8 0.9 L151.3 4.1 L155.7 0.9 L160.2 4.1" fill="none" stroke="#c9ad22" stroke-width="1.5" stroke-linejoin="round"/></svg>
<div class="c" style="left:646.5px;width:60px;text-align:right;top:496.10px;height:28.17px;line-height:28.17px;color:#858585">15</div>
<div class="c" style="left:745.5px;top:496.10px;height:28.17px;line-height:28.17px;width:674.5px;overflow:hidden;"><span style="color:#d4d4d4">  </span><span style="color:#5f9dd8">apiKeyQuery</span><span style="color:#d4d4d4">:</span></div>
<div style="left:750.2px;top:508.1px;width:2px;height:2px;background:#3d3d3d;border-radius:1px"></div>
<div style="left:761.6px;top:508.1px;width:2px;height:2px;background:#3d3d3d;border-radius:1px"></div>
<svg style="left:745px;top:518.06px" width="163.1" height="5" viewBox="0 0 163.1 5"><path d="M0.0 4.1 L4.5 0.9 L8.9 4.1 L13.4 0.9 L17.8 4.1 L22.2 0.9 L26.7 4.1 L31.1 0.9 L35.6 4.1 L40.1 0.9 L44.5 4.1 L49.0 0.9 L53.4 4.1 L57.9 0.9 L62.3 4.1 L66.8 0.9 L71.2 4.1 L75.7 0.9 L80.1 4.1 L84.6 0.9 L89.0 4.1 L93.5 0.9 L97.9 4.1 L102.4 0.9 L106.8 4.1 L111.3 0.9 L115.7 4.1 L120.2 0.9 L124.6 4.1 L129.1 0.9 L133.5 4.1 L138.0 0.9 L142.4 4.1 L146.8 0.9 L151.3 4.1 L155.7 0.9 L160.2 4.1" fill="none" stroke="#c9ad22" stroke-width="1.5" stroke-linejoin="round"/></svg>
<div class="c" style="left:646.5px;width:60px;text-align:right;top:524.26px;height:28.17px;line-height:28.17px;color:#858585">16</div>
<div class="c" style="left:745.5px;top:524.26px;height:28.17px;line-height:28.17px;width:674.5px;overflow:hidden;"><span style="color:#d4d4d4">    </span><span style="color:#5f9dd8">type</span><span style="color:#d4d4d4">:</span><span style="color:#d4d4d4"> </span><span style="color:#d19780">apiKey</span></div>
<div style="left:750.2px;top:536.2px;width:2px;height:2px;background:#3d3d3d;border-radius:1px"></div>
<div style="left:761.6px;top:536.2px;width:2px;height:2px;background:#3d3d3d;border-radius:1px"></div>
<div style="left:773.0px;top:536.2px;width:2px;height:2px;background:#3d3d3d;border-radius:1px"></div>
<div style="left:784.4px;top:536.2px;width:2px;height:2px;background:#3d3d3d;border-radius:1px"></div>
<div style="left:852.8px;top:536.2px;width:2px;height:2px;background:#3d3d3d;border-radius:1px"></div>
<svg style="left:745px;top:546.24px" width="185.9" height="5" viewBox="0 0 185.9 5"><path d="M0.0 4.1 L4.5 0.9 L8.9 4.1 L13.4 0.9 L17.8 4.1 L22.2 0.9 L26.7 4.1 L31.1 0.9 L35.6 4.1 L40.1 0.9 L44.5 4.1 L49.0 0.9 L53.4 4.1 L57.9 0.9 L62.3 4.1 L66.8 0.9 L71.2 4.1 L75.7 0.9 L80.1 4.1 L84.6 0.9 L89.0 4.1 L93.5 0.9 L97.9 4.1 L102.4 0.9 L106.8 4.1 L111.3 0.9 L115.7 4.1 L120.2 0.9 L124.6 4.1 L129.1 0.9 L133.5 4.1 L138.0 0.9 L142.4 4.1 L146.8 0.9 L151.3 4.1 L155.7 0.9 L160.2 4.1 L164.6 0.9 L169.1 4.1 L173.5 0.9 L178.0 4.1 L182.4 0.9" fill="none" stroke="#c9ad22" stroke-width="1.5" stroke-linejoin="round"/></svg>
<div class="c" style="left:646.5px;width:60px;text-align:right;top:552.44px;height:28.17px;line-height:28.17px;color:#c6c6c6">17</div>
<div class="c" style="left:745.5px;top:552.44px;height:28.17px;line-height:28.17px;width:674.5px;overflow:hidden;"><span style="color:#d4d4d4">    </span><span style="color:#5f9dd8">name</span><span style="color:#d4d4d4">:</span><span style="color:#d4d4d4"> </span><span style="color:#d19780">subscription-key</span></div>
<div style="left:750.2px;top:564.4px;width:2px;height:2px;background:#3d3d3d;border-radius:1px"></div>
<div style="left:761.6px;top:564.4px;width:2px;height:2px;background:#3d3d3d;border-radius:1px"></div>
<div style="left:773.0px;top:564.4px;width:2px;height:2px;background:#3d3d3d;border-radius:1px"></div>
<div style="left:784.4px;top:564.4px;width:2px;height:2px;background:#3d3d3d;border-radius:1px"></div>
<div style="left:852.8px;top:564.4px;width:2px;height:2px;background:#3d3d3d;border-radius:1px"></div>
<svg style="left:745px;top:574.41px" width="300.0" height="5" viewBox="0 0 300.0 5"><path d="M0.0 4.1 L4.5 0.9 L8.9 4.1 L13.4 0.9 L17.8 4.1 L22.2 0.9 L26.7 4.1 L31.1 0.9 L35.6 4.1 L40.1 0.9 L44.5 4.1 L49.0 0.9 L53.4 4.1 L57.9 0.9 L62.3 4.1 L66.8 0.9 L71.2 4.1 L75.7 0.9 L80.1 4.1 L84.6 0.9 L89.0 4.1 L93.5 0.9 L97.9 4.1 L102.4 0.9 L106.8 4.1 L111.3 0.9 L115.7 4.1 L120.2 0.9 L124.6 4.1 L129.1 0.9 L133.5 4.1 L138.0 0.9 L142.4 4.1 L146.8 0.9 L151.3 4.1 L155.7 0.9 L160.2 4.1 L164.6 0.9 L169.1 4.1 L173.5 0.9 L178.0 4.1 L182.4 0.9 L186.9 4.1 L191.3 0.9 L195.8 4.1 L200.2 0.9 L204.7 4.1 L209.1 0.9 L213.6 4.1 L218.0 0.9 L222.5 4.1 L226.9 0.9 L231.4 4.1 L235.8 0.9 L240.3 4.1 L244.7 0.9 L249.2 4.1 L253.6 0.9 L258.1 4.1 L262.5 0.9 L267.0 4.1 L271.4 0.9 L275.9 4.1 L280.3 0.9 L284.8 4.1 L289.2 0.9 L293.7 4.1 L298.1 0.9" fill="none" stroke="#c9ad22" stroke-width="1.5" stroke-linejoin="round"/></svg>
<div class="c" style="left:646.5px;width:60px;text-align:right;top:580.61px;height:28.17px;line-height:28.17px;color:#858585">18</div>
<div class="c" style="left:745.5px;top:580.61px;height:28.17px;line-height:28.17px;width:674.5px;overflow:hidden;"><span style="color:#d4d4d4">    </span><span style="color:#5f9dd8">in</span><span style="color:#d4d4d4">:</span><span style="color:#d4d4d4"> </span><span style="color:#d19780">query</span></div>
<div style="left:750.2px;top:592.6px;width:2px;height:2px;background:#3d3d3d;border-radius:1px"></div>
<div style="left:761.6px;top:592.6px;width:2px;height:2px;background:#3d3d3d;border-radius:1px"></div>
<div style="left:773.0px;top:592.6px;width:2px;height:2px;background:#3d3d3d;border-radius:1px"></div>
<div style="left:784.4px;top:592.6px;width:2px;height:2px;background:#3d3d3d;border-radius:1px"></div>
<div style="left:830.0px;top:592.6px;width:2px;height:2px;background:#3d3d3d;border-radius:1px"></div>
<svg style="left:745px;top:602.58px" width="151.7" height="5" viewBox="0 0 151.7 5"><path d="M0.0 4.1 L4.5 0.9 L8.9 4.1 L13.4 0.9 L17.8 4.1 L22.2 0.9 L26.7 4.1 L31.1 0.9 L35.6 4.1 L40.1 0.9 L44.5 4.1 L49.0 0.9 L53.4 4.1 L57.9 0.9 L62.3 4.1 L66.8 0.9 L71.2 4.1 L75.7 0.9 L80.1 4.1 L84.6 0.9 L89.0 4.1 L93.5 0.9 L97.9 4.1 L102.4 0.9 L106.8 4.1 L111.3 0.9 L115.7 4.1 L120.2 0.9 L124.6 4.1 L129.1 0.9 L133.5 4.1 L138.0 0.9 L142.4 4.1 L146.8 0.9 L151.3 4.1" fill="none" stroke="#c9ad22" stroke-width="1.5" stroke-linejoin="round"/></svg>
<div class="c" style="left:646.5px;width:60px;text-align:right;top:608.78px;height:28.17px;line-height:28.17px;color:#858585">19</div>
<div class="c" style="left:745.5px;top:608.78px;height:28.17px;line-height:28.17px;width:674.5px;overflow:hidden;"><span style="color:#5f9dd8">security</span><span style="color:#d4d4d4">:</span></div>
<svg style="left:745px;top:630.75px" width="106.1" height="5" viewBox="0 0 106.1 5"><path d="M0.0 4.1 L4.5 0.9 L8.9 4.1 L13.4 0.9 L17.8 4.1 L22.2 0.9 L26.7 4.1 L31.1 0.9 L35.6 4.1 L40.1 0.9 L44.5 4.1 L49.0 0.9 L53.4 4.1 L57.9 0.9 L62.3 4.1 L66.8 0.9 L71.2 4.1 L75.7 0.9 L80.1 4.1 L84.6 0.9 L89.0 4.1 L93.5 0.9 L97.9 4.1 L102.4 0.9" fill="none" stroke="#c9ad22" stroke-width="1.5" stroke-linejoin="round"/></svg>
<div class="c" style="left:646.5px;width:60px;text-align:right;top:636.95px;height:28.17px;line-height:28.17px;color:#858585">20</div>
<div class="c" style="left:745.5px;top:636.95px;height:28.17px;line-height:28.17px;width:674.5px;overflow:hidden;"><span style="color:#d4d4d4">  </span><span style="color:#d4d4d4">-</span><span style="color:#d4d4d4"> </span><span style="color:#5f9dd8">apiKeyHeader</span><span style="color:#d4d4d4">:</span><span style="color:#d4d4d4"> </span><span style="color:#ffd700">[]</span></div>
<div style="left:750.2px;top:648.9px;width:2px;height:2px;background:#3d3d3d;border-radius:1px"></div>
<div style="left:761.6px;top:648.9px;width:2px;height:2px;background:#3d3d3d;border-radius:1px"></div>
<div style="left:784.4px;top:648.9px;width:2px;height:2px;background:#3d3d3d;border-radius:1px"></div>
<div style="left:944.0px;top:648.9px;width:2px;height:2px;background:#3d3d3d;border-radius:1px"></div>
<svg style="left:745px;top:658.92px" width="231.5" height="5" viewBox="0 0 231.5 5"><path d="M0.0 4.1 L4.5 0.9 L8.9 4.1 L13.4 0.9 L17.8 4.1 L22.2 0.9 L26.7 4.1 L31.1 0.9 L35.6 4.1 L40.1 0.9 L44.5 4.1 L49.0 0.9 L53.4 4.1 L57.9 0.9 L62.3 4.1 L66.8 0.9 L71.2 4.1 L75.7 0.9 L80.1 4.1 L84.6 0.9 L89.0 4.1 L93.5 0.9 L97.9 4.1 L102.4 0.9 L106.8 4.1 L111.3 0.9 L115.7 4.1 L120.2 0.9 L124.6 4.1 L129.1 0.9 L133.5 4.1 L138.0 0.9 L142.4 4.1 L146.8 0.9 L151.3 4.1 L155.7 0.9 L160.2 4.1 L164.6 0.9 L169.1 4.1 L173.5 0.9 L178.0 4.1 L182.4 0.9 L186.9 4.1 L191.3 0.9 L195.8 4.1 L200.2 0.9 L204.7 4.1 L209.1 0.9 L213.6 4.1 L218.0 0.9 L222.5 4.1 L226.9 0.9 L231.4 4.1" fill="none" stroke="#c9ad22" stroke-width="1.5" stroke-linejoin="round"/></svg>
<div style="left:1421px;top:76px;width:112px;height:575px;background:#1b1b1b;"></div>
<div style="left:1522px;top:76px;width:1px;height:575px;background:#303030;"></div>
<div style="left:1524px;top:119.3px;width:9px;height:3px;background:#8a8a8a;"></div>
<svg style="left:0;top:0" width="1533" height="620" viewBox="0 0 1533 620" shape-rendering="crispEdges"><g fill="#c9a82c"><rect x="1432.5" y="76.22" width="89.28" height="5.73"/><rect x="1432.5" y="81.90" width="41.67" height="2.89"/><rect x="1432.5" y="84.74" width="89.28" height="3.96"/><rect x="1432.5" y="88.65" width="27.46" height="2.36"/><rect x="1432.5" y="90.96" width="55.00" height="3.07"/><rect x="1432.5" y="93.98" width="12.37" height="8.93"/><rect x="1432.5" y="102.86" width="30.13" height="2.71"/><rect x="1432.5" y="105.52" width="23.02" height="6.27"/><rect x="1432.5" y="111.74" width="52.33" height="3.07"/><rect x="1432.5" y="114.76" width="22.14" height="8.58"/><rect x="1432.5" y="123.29" width="39.01" height="3.60"/><rect x="1432.5" y="126.84" width="19.47" height="2.71"/><rect x="1432.5" y="129.50" width="14.14" height="2.71"/><rect x="1432.5" y="132.17" width="29.24" height="6.27"/><rect x="1432.5" y="138.38" width="9.70" height="2.71"/><rect x="1432.5" y="141.05" width="18.58" height="2.71"/><rect x="1432.5" y="143.71" width="89.28" height="7.15"/><rect x="1432.5" y="150.82" width="44.34" height="2.71"/><rect x="1432.5" y="153.48" width="25.69" height="2.71"/><rect x="1432.5" y="156.15" width="89.28" height="3.25"/><rect x="1432.5" y="159.34" width="28.35" height="3.07"/><rect x="1432.5" y="162.36" width="31.90" height="5.38"/><rect x="1432.5" y="167.69" width="28.35" height="3.07"/><rect x="1432.5" y="170.71" width="56.77" height="4.14"/><rect x="1432.5" y="174.80" width="34.57" height="1.83"/><rect x="1432.5" y="176.57" width="89.28" height="3.60"/><rect x="1432.5" y="180.12" width="28.35" height="2.71"/><rect x="1432.5" y="182.79" width="32.79" height="3.60"/><rect x="1432.5" y="186.34" width="22.14" height="5.38"/><rect x="1432.5" y="191.67" width="37.23" height="3.60"/><rect x="1432.5" y="195.22" width="23.02" height="2.71"/><rect x="1432.5" y="197.89" width="61.21" height="3.25"/><rect x="1432.5" y="201.08" width="23.91" height="2.54"/><rect x="1432.5" y="203.57" width="89.28" height="6.80"/><rect x="1432.5" y="210.32" width="43.45" height="2.71"/><rect x="1432.5" y="212.98" width="25.69" height="2.71"/><rect x="1432.5" y="215.65" width="49.31" height="3.25"/><rect x="1432.5" y="218.85" width="23.02" height="5.73"/><rect x="1432.5" y="224.53" width="37.23" height="3.60"/><rect x="1432.5" y="228.08" width="23.02" height="2.71"/><rect x="1432.5" y="230.75" width="44.69" height="3.07"/><rect x="1432.5" y="233.77" width="31.90" height="5.02"/><rect x="1432.5" y="238.74" width="89.28" height="6.80"/><rect x="1432.5" y="245.49" width="25.69" height="2.18"/><rect x="1432.5" y="247.62" width="48.78" height="2.36"/><rect x="1432.5" y="250.00" width="48.78" height="1.83"/><rect x="1432.5" y="251.78" width="23.02" height="5.38"/><rect x="1432.5" y="257.10" width="37.23" height="3.25"/><rect x="1432.5" y="260.30" width="23.02" height="2.54"/><rect x="1432.5" y="262.79" width="61.21" height="3.60"/><rect x="1432.5" y="266.34" width="37.23" height="2.36"/><rect x="1432.5" y="268.65" width="89.28" height="6.27"/><rect x="1432.5" y="274.87" width="47.89" height="3.25"/><rect x="1432.5" y="278.06" width="25.69" height="2.54"/><rect x="1432.5" y="280.55" width="49.31" height="3.25"/><rect x="1432.5" y="283.75" width="89.28" height="3.25"/><rect x="1432.5" y="286.94" width="27.46" height="3.07"/><rect x="1432.5" y="289.96" width="35.81" height="3.07"/><rect x="1432.5" y="292.98" width="25.69" height="2.89"/><rect x="1432.5" y="295.83" width="35.81" height="3.07"/><rect x="1432.5" y="298.85" width="22.14" height="5.38"/><rect x="1432.5" y="304.17" width="37.23" height="3.60"/><rect x="1432.5" y="307.73" width="23.02" height="2.71"/><rect x="1432.5" y="310.39" width="44.69" height="3.60"/><rect x="1432.5" y="313.94" width="30.13" height="3.25"/><rect x="1432.5" y="317.14" width="23.02" height="2.54"/><rect x="1432.5" y="319.63" width="30.13" height="2.89"/><rect x="1432.5" y="322.47" width="18.58" height="2.54"/><rect x="1432.5" y="324.96" width="89.28" height="4.14"/><rect x="1432.5" y="329.04" width="25.69" height="2.36"/><rect x="1432.5" y="331.35" width="30.13" height="5.73"/><rect x="1432.5" y="337.03" width="56.42" height="3.60"/><rect x="1432.5" y="340.59" width="34.57" height="2.71"/><rect x="1432.5" y="343.25" width="89.28" height="3.60"/><rect x="1432.5" y="346.80" width="28.35" height="2.71"/><rect x="1432.5" y="349.47" width="32.79" height="3.25"/><rect x="1432.5" y="352.66" width="22.14" height="5.73"/><rect x="1432.5" y="358.35" width="37.23" height="3.25"/><rect x="1432.5" y="361.55" width="23.02" height="2.18"/><rect x="1432.5" y="363.68" width="61.21" height="3.60"/><rect x="1432.5" y="367.23" width="23.91" height="2.18"/><rect x="1432.5" y="369.36" width="89.28" height="4.14"/><rect x="1432.5" y="373.45" width="43.45" height="2.71"/><rect x="1432.5" y="376.11" width="25.69" height="2.18"/><rect x="1432.5" y="378.24" width="49.31" height="4.14"/><rect x="1432.5" y="382.33" width="22.14" height="5.38"/><rect x="1432.5" y="387.66" width="37.23" height="3.60"/><rect x="1432.5" y="391.21" width="23.02" height="2.36"/><rect x="1432.5" y="393.52" width="50.56" height="3.60"/><rect x="1432.5" y="397.07" width="30.13" height="2.54"/><rect x="1432.5" y="399.56" width="37.23" height="2.89"/><rect x="1432.5" y="402.40" width="89.28" height="3.60"/><rect x="1432.5" y="405.95" width="55.00" height="3.07"/><rect x="1432.5" y="408.97" width="25.69" height="2.36"/><rect x="1432.5" y="411.28" width="49.31" height="3.60"/><rect x="1432.5" y="414.83" width="22.14" height="5.38"/><rect x="1432.5" y="420.16" width="37.23" height="3.60"/><rect x="1432.5" y="423.71" width="23.02" height="2.54"/><rect x="1432.5" y="426.20" width="61.21" height="3.78"/><rect x="1432.5" y="430.00" width="34.57" height="2.18"/><rect x="1432.5" y="432.13" width="89.28" height="3.25"/><rect x="1432.5" y="435.33" width="52.33" height="3.25"/><rect x="1432.5" y="438.53" width="25.69" height="2.54"/><rect x="1432.5" y="441.01" width="49.31" height="3.60"/><rect x="1432.5" y="444.56" width="22.14" height="5.38"/><rect x="1432.5" y="449.89" width="37.23" height="3.60"/><rect x="1432.5" y="453.45" width="23.02" height="2.36"/><rect x="1432.5" y="455.75" width="61.21" height="3.60"/><rect x="1432.5" y="459.31" width="15.92" height="2.71"/><rect x="1432.5" y="461.97" width="89.28" height="3.25"/><rect x="1432.5" y="465.17" width="41.67" height="3.07"/><rect x="1432.5" y="468.19" width="25.69" height="2.71"/><rect x="1432.5" y="470.85" width="31.02" height="3.60"/><rect x="1432.5" y="474.40" width="28.71" height="2.71"/><rect x="1432.5" y="477.07" width="37.23" height="2.36"/><rect x="1432.5" y="479.38" width="56.42" height="3.96"/><rect x="1432.5" y="483.29" width="34.57" height="2.71"/><rect x="1432.5" y="485.95" width="22.14" height="5.38"/><rect x="1432.5" y="491.28" width="37.23" height="3.60"/><rect x="1432.5" y="494.83" width="23.02" height="2.36"/><rect x="1432.5" y="497.14" width="61.21" height="3.60"/><rect x="1432.5" y="500.69" width="21.25" height="2.54"/><rect x="1432.5" y="503.18" width="89.28" height="3.60"/><rect x="1432.5" y="506.73" width="40.43" height="2.89"/><rect x="1432.5" y="509.57" width="25.69" height="2.54"/><rect x="1432.5" y="512.06" width="49.31" height="3.60"/><rect x="1432.5" y="515.61" width="22.14" height="5.38"/><rect x="1432.5" y="520.94" width="37.23" height="3.25"/><rect x="1432.5" y="524.14" width="23.02" height="2.71"/><rect x="1432.5" y="526.80" width="44.69" height="3.60"/><rect x="1432.5" y="530.36" width="34.57" height="2.71"/><rect x="1432.5" y="533.02" width="89.28" height="3.25"/><rect x="1432.5" y="536.22" width="52.33" height="3.07"/><rect x="1432.5" y="539.24" width="25.69" height="2.71"/><rect x="1432.5" y="541.90" width="49.31" height="3.60"/><rect x="1432.5" y="545.45" width="22.14" height="5.38"/><rect x="1432.5" y="550.78" width="37.23" height="3.25"/><rect x="1432.5" y="553.98" width="23.02" height="2.54"/><rect x="1432.5" y="556.47" width="61.21" height="3.60"/><rect x="1432.5" y="560.02" width="34.57" height="2.36"/><rect x="1432.5" y="562.33" width="89.28" height="4.14"/><rect x="1432.5" y="566.41" width="52.33" height="3.07"/><rect x="1432.5" y="569.43" width="25.69" height="2.36"/><rect x="1432.5" y="571.74" width="49.31" height="3.60"/><rect x="1432.5" y="575.29" width="22.14" height="5.38"/><rect x="1432.5" y="580.62" width="37.23" height="3.07"/><rect x="1432.5" y="583.64" width="23.02" height="2.36"/><rect x="1432.5" y="585.95" width="61.21" height="3.96"/><rect x="1432.5" y="589.86" width="16.81" height="2.71"/><rect x="1432.5" y="592.52" width="7.93" height="2.71"/><rect x="1432.5" y="595.19" width="18.58" height="5.73"/><rect x="1432.5" y="600.87" width="47.89" height="3.60"/><rect x="1432.5" y="604.42" width="26.58" height="3.25"/><rect x="1432.5" y="607.62" width="25.69" height="2.89"/></g></svg>
<div style="left:0px;top:650.3px;width:1533px;height:362.70000000000005px;background:#1e1e1e;"></div>
<div style="left:0px;top:650.3px;width:1533px;height:1.3px;background:#414141;"></div>
<div id="t18" class="t" style="left:20px;top:664.60px;height:30px;line-height:30px;font-size:16px;color:#e7e7e7;font-weight:400;letter-spacing:-1.275px;">PROBLEMS</div>
<div class="badge" style="left:115px;top:665.5px;width:32px;height:26px;line-height:27.6px;font-size:16px">30</div>
<div style="left:17px;top:693.1px;width:130.5px;height:1.4px;background:#dcdcdc;"></div>
<div id="t19" class="t" style="left:179px;top:664.60px;height:30px;line-height:30px;font-size:16px;color:#969696;font-weight:400;letter-spacing:-0.856px;">OUTPUT</div>
<div id="t20" class="t" style="left:276px;top:664.60px;height:30px;line-height:30px;font-size:16px;color:#969696;font-weight:400;letter-spacing:-1.049px;">DEBUG CONSOLE</div>
<div id="t21" class="t" style="left:438.5px;top:664.60px;height:30px;line-height:30px;font-size:16px;color:#969696;font-weight:400;letter-spacing:-0.772px;">TERMINAL</div>
<div id="t22" class="t" style="left:550px;top:664.60px;height:30px;line-height:30px;font-size:16px;color:#969696;font-weight:400;letter-spacing:-1.957px;">PORTS</div>
<svg style="left:623.3px;top:675.6px" width="22" height="6" viewBox="-11 -3 22 6"><circle cx="-8" cy="0" r="1.7" fill="#c5c5c5"/><circle cx="0" cy="0" r="1.7" fill="#c5c5c5"/><circle cx="8" cy="0" r="1.7" fill="#c5c5c5"/></svg>
<div style="left:778px;top:661px;width:592px;height:36px;background:#3c3c3c;border-radius:2px"></div>
<div id="t23" class="t" style="left:788px;top:663.90px;height:30px;line-height:30px;font-size:19.5px;color:#a0a0a0;font-weight:400;letter-spacing:-0.683px;">Filter (e.g. text, **/*.ts, !**/node_modules/**)</div>
<svg style="left:1336px;top:667px" width="26" height="24" viewBox="0 0 26 24"><path d="M3 3.2 H23 L15.4 12 V20.2 H10.6 V12 Z" fill="none" stroke="#c5c5c5" stroke-width="1.7" stroke-linejoin="round"/></svg>
<svg style="left:1382px;top:668px" width="22" height="22" viewBox="0 0 22 22"><path d="M6.5 5.5 V2.5 H19.5 V14.5 H16" fill="none" stroke="#c5c5c5" stroke-width="1.6"/><rect x="2.5" y="6.5" width="13" height="12" rx="1" fill="none" stroke="#c5c5c5" stroke-width="1.6"/><path d="M5.5 12.5 H12.5" stroke="#c5c5c5" stroke-width="1.6"/></svg>
<svg style="left:1421px;top:669px" width="22" height="20" viewBox="0 0 22 20"><path d="M1 2.5 H17.5 M1 7.2 H19.5 M1 12 H14.5 M1 16.7 H13" stroke="#c5c5c5" stroke-width="1.6"/></svg>
<svg style="left:1460px;top:669px" width="20" height="14" viewBox="0 0 20 14"><path d="M3 11 L10 4.4 L17 11" fill="none" stroke="#c5c5c5" stroke-width="1.7"/></svg>
<svg style="left:1501.5px;top:669.8px" width="14.4" height="14.4" viewBox="-7.2 -7.2 14.4 14.4"><path d="M-6.2 -6.2 L6.2 6.2 M6.2 -6.2 L-6.2 6.2" stroke="#c5c5c5" stroke-width="1.7" fill="none"/></svg>
<svg style="left:10px;top:712px" width="18" height="14" viewBox="0 0 18 14"><path d="M2 3.5 L9 10.5 L16 3.5" fill="none" stroke="#c5c5c5" stroke-width="1.7"/></svg>
<svg style="left:38.5px;top:709px" width="16" height="20.5" viewBox="0 0 16 20.5"><path d="M2 0.3 H10.2 L15.7 5.8 V18.4 a1.8 1.8 0 0 1 -1.8 1.8 H2 a1.8 1.8 0 0 1 -1.8 -1.8 V2.1 A1.8 1.8 0 0 1 2 0.3 Z" fill="#e5605e"/><path d="M9.6 2.2 V6.6 H14 Z" fill="#8c2f2c"/><rect x="2.2" y="10.2" width="7" height="1.7" fill="#8c2f2c"/><rect x="5" y="14.2" width="8.6" height="1.7" fill="#8c2f2c"/></svg>
<div id="t24" class="t" style="left:68px;top:704.40px;height:30px;line-height:30px;font-size:19.5px;color:#cccccc;font-weight:400;letter-spacing:-0.112px;">conferenceapi-opid.yaml</div>
<div class="badge" style="left:293px;top:707.5px;width:34px;height:25px;line-height:26.6px;font-size:16px">30</div>
<svg style="left:56.0px;top:740.62px" width="22" height="20" viewBox="0 0 22 20"><path d="M11 1.6 L20.6 18.6 H1.4 Z" fill="none" stroke="#bfa830" stroke-width="1.7" stroke-linejoin="round"/><rect x="10.1" y="7.2" width="1.8" height="6" fill="#bfa830"/><rect x="10.1" y="14.4" width="1.8" height="1.9" fill="#bfa830"/></svg>
<div id="t25" class="t" style="left:88.5px;top:737.02px;height:30px;line-height:30px;font-size:19.5px;color:#cccccc;font-weight:400;letter-spacing:-0.137px;">OpenAPI object must have non-empty "tags" array.</div>
<div id="t26" class="t" style="left:531.3px;top:737.02px;height:30px;line-height:30px;font-size:19.5px;color:#999999;font-weight:400;letter-spacing:-0.173px;">spectral(openapi-tags)</div>
<div id="t27" class="t" style="left:731.8px;top:737.02px;height:30px;line-height:30px;font-size:19.5px;color:#999999;font-weight:400;letter-spacing:-0.496px;">[Ln 1, Col 1]</div>
<svg style="left:56.0px;top:773.24px" width="22" height="20" viewBox="0 0 22 20"><path d="M11 1.6 L20.6 18.6 H1.4 Z" fill="none" stroke="#bfa830" stroke-width="1.7" stroke-linejoin="round"/><rect x="10.1" y="7.2" width="1.8" height="6" fill="#bfa830"/><rect x="10.1" y="14.4" width="1.8" height="1.9" fill="#bfa830"/></svg>
<div id="t28" class="t" style="left:88.5px;top:769.64px;height:30px;line-height:30px;font-size:19.5px;color:#cccccc;font-weight:400;letter-spacing:-0.057px;">Info object must have "contact" object.</div>
<div id="t29" class="t" style="left:427.5px;top:769.64px;height:30px;line-height:30px;font-size:19.5px;color:#999999;font-weight:400;letter-spacing:-0.099px;">spectral(info-contact)</div>
<div id="t30" class="t" style="left:618px;top:769.64px;height:30px;line-height:30px;font-size:19.5px;color:#999999;font-weight:400;letter-spacing:-0.538px;">[Ln 2, Col 6]</div>
<svg style="left:56.0px;top:805.86px" width="22" height="20" viewBox="0 0 22 20"><path d="M11 1.6 L20.6 18.6 H1.4 Z" fill="none" stroke="#bfa830" stroke-width="1.7" stroke-linejoin="round"/><rect x="10.1" y="7.2" width="1.8" height="6" fill="#bfa830"/><rect x="10.1" y="14.4" width="1.8" height="1.9" fill="#bfa830"/></svg>
<div id="t31" class="t" style="left:88.5px;top:802.26px;height:30px;line-height:30px;font-size:19.5px;color:#cccccc;font-weight:400;letter-spacing:-0.110px;">Info object must have "license" object.</div>
<div id="t32" class="t" style="left:421.8px;top:802.26px;height:30px;line-height:30px;font-size:19.5px;color:#999999;font-weight:400;letter-spacing:-0.238px;">spectral(info-license)</div>
<div id="t33" class="t" style="left:606.8px;top:802.26px;height:30px;line-height:30px;font-size:19.5px;color:#999999;font-weight:400;letter-spacing:-0.496px;">[Ln 2, Col 6]</div>
<svg style="left:56.0px;top:838.48px" width="22" height="20" viewBox="0 0 22 20"><path d="M11 1.6 L20.6 18.6 H1.4 Z" fill="none" stroke="#bfa830" stroke-width="1.7" stroke-linejoin="round"/><rect x="10.1" y="7.2" width="1.8" height="6" fill="#bfa830"/><rect x="10.1" y="14.4" width="1.8" height="1.9" fill="#bfa830"/></svg>
<div id="t34" class="t" style="left:88.5px;top:834.88px;height:30px;line-height:30px;font-size:19.5px;color:#cccccc;font-weight:400;letter-spacing:-0.164px;">License object must include "url".</div>
<div id="t35" class="t" style="left:378px;top:834.88px;height:30px;line-height:30px;font-size:19.5px;color:#999999;font-weight:400;letter-spacing:-0.257px;">spectral(license-url)</div>
<div id="t36" class="t" style="left:553px;top:834.88px;height:30px;line-height:30px;font-size:19.5px;color:#999999;font-weight:400;letter-spacing:-0.530px;">[Ln 2, Col 6]</div>
<svg style="left:56.0px;top:871.1px" width="22" height="20" viewBox="0 0 22 20"><path d="M11 1.6 L20.6 18.6 H1.4 Z" fill="none" stroke="#bfa830" stroke-width="1.7" stroke-linejoin="round"/><rect x="10.1" y="7.2" width="1.8" height="6" fill="#bfa830"/><rect x="10.1" y="14.4" width="1.8" height="1.9" fill="#bfa830"/></svg>
<div id="t37" class="t" style="left:88.5px;top:867.50px;height:30px;line-height:30px;font-size:19.5px;color:#cccccc;font-weight:400;letter-spacing:-0.067px;">Operation must have non-empty "tags" array.</div>
<div id="t38" class="t" style="left:483.8px;top:867.50px;height:30px;line-height:30px;font-size:19.5px;color:#999999;font-weight:400;letter-spacing:-0.128px;">spectral(operation-tags)</div>
<div id="t39" class="t" style="left:697.3px;top:867.50px;height:30px;line-height:30px;font-size:19.5px;color:#999999;font-weight:400;letter-spacing:-0.508px;">[Ln 24, Col 9]</div>
<svg style="left:56.0px;top:903.72px" width="22" height="20" viewBox="0 0 22 20"><path d="M11 1.6 L20.6 18.6 H1.4 Z" fill="none" stroke="#bfa830" stroke-width="1.7" stroke-linejoin="round"/><rect x="10.1" y="7.2" width="1.8" height="6" fill="#bfa830"/><rect x="10.1" y="14.4" width="1.8" height="1.9" fill="#bfa830"/></svg>
<div id="t40" class="t" style="left:88.5px;top:900.12px;height:30px;line-height:30px;font-size:19.5px;color:#cccccc;font-weight:400;letter-spacing:-0.205px;">Parameter objects must have "description".</div>
<div id="t41" class="t" style="left:462.2px;top:900.12px;height:30px;line-height:30px;font-size:19.5px;color:#999999;font-weight:400;letter-spacing:-0.181px;">spectral(oas2-parameter-description)</div>
<div id="t42" class="t" style="left:786.2px;top:900.12px;height:30px;line-height:30px;font-size:19.5px;color:#999999;font-weight:400;letter-spacing:-0.414px;">[Ln 28, Col 11]</div>
<svg style="left:56.0px;top:936.3399999999999px" width="22" height="20" viewBox="0 0 22 20"><path d="M11 1.6 L20.6 18.6 H1.4 Z" fill="none" stroke="#bfa830" stroke-width="1.7" stroke-linejoin="round"/><rect x="10.1" y="7.2" width="1.8" height="6" fill="#bfa830"/><rect x="10.1" y="14.4" width="1.8" height="1.9" fill="#bfa830"/></svg>
<div id="t43" class="t" style="left:88.5px;top:932.74px;height:30px;line-height:30px;font-size:19.5px;color:#cccccc;font-weight:400;letter-spacing:-0.205px;">Parameter objects must have "description".</div>
<div id="t44" class="t" style="left:462.2px;top:932.74px;height:30px;line-height:30px;font-size:19.5px;color:#999999;font-weight:400;letter-spacing:-0.181px;">spectral(oas2-parameter-description)</div>
<div id="t45" class="t" style="left:786.2px;top:932.74px;height:30px;line-height:30px;font-size:19.5px;color:#999999;font-weight:400;letter-spacing:-0.414px;">[Ln 35, Col 11]</div>
<svg style="left:56.0px;top:968.96px" width="22" height="20" viewBox="0 0 22 20"><path d="M11 1.6 L20.6 18.6 H1.4 Z" fill="none" stroke="#bfa830" stroke-width="1.7" stroke-linejoin="round"/><rect x="10.1" y="7.2" width="1.8" height="6" fill="#bfa830"/><rect x="10.1" y="14.4" width="1.8" height="1.9" fill="#bfa830"/></svg>
<div id="t46" class="t" style="left:88.5px;top:965.36px;height:30px;line-height:30px;font-size:19.5px;color:#cccccc;font-weight:400;letter-spacing:-0.067px;">Operation must have non-empty "tags" array.</div>
<div id="t47" class="t" style="left:483.8px;top:965.36px;height:30px;line-height:30px;font-size:19.5px;color:#999999;font-weight:400;letter-spacing:-0.128px;">spectral(operation-tags)</div>
<div id="t48" class="t" style="left:697.3px;top:965.36px;height:30px;line-height:30px;font-size:19.5px;color:#999999;font-weight:400;letter-spacing:-0.508px;">[Ln 44, Col 9]</div>
<svg style="left:56.0px;top:1001.5799999999999px" width="22" height="20" viewBox="0 0 22 20"><path d="M11 1.6 L20.6 18.6 H1.4 Z" fill="none" stroke="#bfa830" stroke-width="1.7" stroke-linejoin="round"/><rect x="10.1" y="7.2" width="1.8" height="6" fill="#bfa830"/><rect x="10.1" y="14.4" width="1.8" height="1.9" fill="#bfa830"/></svg>
<div id="t49" class="t" style="left:88.5px;top:997.98px;height:30px;line-height:30px;font-size:19.5px;color:#cccccc;font-weight:400;letter-spacing:-0.160px;">Operation must have "operationId".</div>
<div id="t50" class="t" style="left:399px;top:997.98px;height:30px;line-height:30px;font-size:19.5px;color:#999999;font-weight:400;letter-spacing:0.011px;">spectral(operation-operationId)</div>
<div id="t51" class="t" style="left:676px;top:997.98px;height:30px;line-height:30px;font-size:19.5px;color:#999999;font-weight:400;letter-spacing:-0.462px;">[Ln 56, Col 9]</div>
</div></body></html>
